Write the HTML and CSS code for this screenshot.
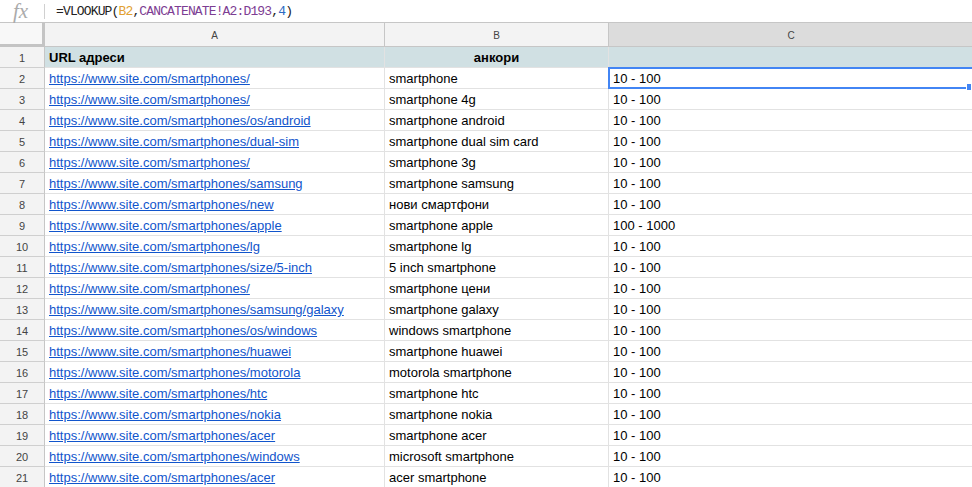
FILE: index.html
```html
<!DOCTYPE html>
<html>
<head>
<meta charset="utf-8">
<link rel="stylesheet" href="styles.css">
</head>
<body>
<div class="formula-bar">
  <span class="fx">fx</span>
  <span class="sep"></span>
  <span class="formula">=VLOOKUP(<span class="r1">B2</span>,<span class="r2">CANCATENATE!A2:D193</span>,<span class="num">4</span>)</span>
</div>
<div class="grid">
  <div class="corner"></div>
  <div class="colhead">A</div>
  <div class="colhead">B</div>
  <div class="colhead sel">C</div>

  <div class="rowhead">1</div>
  <div class="cell hdr">URL адреси</div>
  <div class="cell hdr center">анкори</div>
  <div class="cell hdr"></div>

  <div class="rowhead">2</div>
  <div class="cell"><span class="link">https://www.site.com/smartphones/</span></div>
  <div class="cell">smartphone</div>
  <div class="cell active">10 - 100<span class="handle"></span></div>

  <div class="rowhead">3</div>
  <div class="cell"><span class="link">https://www.site.com/smartphones/</span></div>
  <div class="cell">smartphone 4g</div>
  <div class="cell">10 - 100</div>

  <div class="rowhead">4</div>
  <div class="cell"><span class="link">https://www.site.com/smartphones/os/android</span></div>
  <div class="cell">smartphone android</div>
  <div class="cell">10 - 100</div>

  <div class="rowhead">5</div>
  <div class="cell"><span class="link">https://www.site.com/smartphones/dual-sim</span></div>
  <div class="cell">smartphone dual sim card</div>
  <div class="cell">10 - 100</div>

  <div class="rowhead">6</div>
  <div class="cell"><span class="link">https://www.site.com/smartphones/</span></div>
  <div class="cell">smartphone 3g</div>
  <div class="cell">10 - 100</div>

  <div class="rowhead">7</div>
  <div class="cell"><span class="link">https://www.site.com/smartphones/samsung</span></div>
  <div class="cell">smartphone samsung</div>
  <div class="cell">10 - 100</div>

  <div class="rowhead">8</div>
  <div class="cell"><span class="link">https://www.site.com/smartphones/new</span></div>
  <div class="cell">нови смартфони</div>
  <div class="cell">10 - 100</div>

  <div class="rowhead">9</div>
  <div class="cell"><span class="link">https://www.site.com/smartphones/apple</span></div>
  <div class="cell">smartphone apple</div>
  <div class="cell">100 - 1000</div>

  <div class="rowhead">10</div>
  <div class="cell"><span class="link">https://www.site.com/smartphones/lg</span></div>
  <div class="cell">smartphone lg</div>
  <div class="cell">10 - 100</div>

  <div class="rowhead">11</div>
  <div class="cell"><span class="link">https://www.site.com/smartphones/size/5-inch</span></div>
  <div class="cell">5 inch smartphone</div>
  <div class="cell">10 - 100</div>

  <div class="rowhead">12</div>
  <div class="cell"><span class="link">https://www.site.com/smartphones/</span></div>
  <div class="cell">smartphone цени</div>
  <div class="cell">10 - 100</div>

  <div class="rowhead">13</div>
  <div class="cell"><span class="link">https://www.site.com/smartphones/samsung/galaxy</span></div>
  <div class="cell">smartphone galaxy</div>
  <div class="cell">10 - 100</div>

  <div class="rowhead">14</div>
  <div class="cell"><span class="link">https://www.site.com/smartphones/os/windows</span></div>
  <div class="cell">windows smartphone</div>
  <div class="cell">10 - 100</div>

  <div class="rowhead">15</div>
  <div class="cell"><span class="link">https://www.site.com/smartphones/huawei</span></div>
  <div class="cell">smartphone huawei</div>
  <div class="cell">10 - 100</div>

  <div class="rowhead">16</div>
  <div class="cell"><span class="link">https://www.site.com/smartphones/motorola</span></div>
  <div class="cell">motorola smartphone</div>
  <div class="cell">10 - 100</div>

  <div class="rowhead">17</div>
  <div class="cell"><span class="link">https://www.site.com/smartphones/htc</span></div>
  <div class="cell">smartphone htc</div>
  <div class="cell">10 - 100</div>

  <div class="rowhead">18</div>
  <div class="cell"><span class="link">https://www.site.com/smartphones/nokia</span></div>
  <div class="cell">smartphone nokia</div>
  <div class="cell">10 - 100</div>

  <div class="rowhead">19</div>
  <div class="cell"><span class="link">https://www.site.com/smartphones/acer</span></div>
  <div class="cell">smartphone acer</div>
  <div class="cell">10 - 100</div>

  <div class="rowhead">20</div>
  <div class="cell"><span class="link">https://www.site.com/smartphones/windows</span></div>
  <div class="cell">microsoft smartphone</div>
  <div class="cell">10 - 100</div>

  <div class="rowhead">21</div>
  <div class="cell"><span class="link">https://www.site.com/smartphones/acer</span></div>
  <div class="cell">acer smartphone</div>
  <div class="cell">10 - 100</div>
</div>
</body>
</html>
```
FILE: styles.css
```css
html, body {
  margin: 0;
  padding: 0;
  background: #fff;
  overflow: hidden;
}
body {
  width: 972px;
  height: 487px;
  font-family: "Liberation Sans", Arial, sans-serif;
}
.formula-bar {
  height: 22px;
  border-bottom: 1px solid #c6c6c6;
  display: flex;
  align-items: center;
  box-sizing: content-box;
}
.fx {
  font-family: "Liberation Serif", serif;
  font-style: italic;
  font-size: 21px;
  color: #ababab;
  width: 31px;
  margin-left: 13px;
  line-height: 22px;
}
.sep {
  width: 1px;
  height: 15px;
  background: #d0d0d0;
}
.formula {
  margin-left: 11px;
  font-family: "Liberation Mono", monospace;
  font-size: 13px;
  letter-spacing: -0.86px;
  color: #222;
  white-space: nowrap;
}
.r1 { color: #e2a031; }
.r2 { color: #7d3d93; }
.num { color: #2e6ac2; }

.grid {
  display: grid;
  grid-template-columns: 45px 340px 224px 365px;
  grid-template-rows: 24px;
  grid-auto-rows: 21px;
}
.grid > div {
  box-sizing: border-box;
  white-space: nowrap;
  overflow: hidden;
}
.corner {
  background: #f8f8f8;
  border-right: 3px solid #c4c4c4;
  border-bottom: 3px solid #c4c4c4;
}
.colhead {
  background: #f3f3f3;
  border-right: 1px solid #c6c6c6;
  border-bottom: 1px solid #c6c6c6;
  font-size: 10px;
  color: #444;
  display: flex;
  align-items: center;
  justify-content: center;
  padding-top: 1px;
}
.colhead.sel {
  background: #dcdcdc;
}
.rowhead {
  background: #f3f3f3;
  border-right: 1px solid #c6c6c6;
  border-bottom: 1px solid #cfcfcf;
  font-size: 11px;
  color: #444;
  display: flex;
  align-items: center;
  justify-content: center;
  padding-top: 1px;
}
.cell {
  border-right: 1px solid #e2e2e2;
  border-bottom: 1px solid #e2e2e2;
  font-size: 13px;
  color: #000;
  padding: 2px 4px 0;
  line-height: 18px;
}
.cell.hdr {
  background: #d0e0e3;
  font-weight: bold;
}
.cell.center {
  text-align: center;
}
.link {
  color: #1155cc;
  text-decoration: underline;
}
.cell.active {
  position: relative;
  overflow: visible;
  border: 2px solid #4285f4;
  margin: -1px 0 0 -1px;
  padding: 1px 3px 0;
  line-height: 18px;
  height: 22px;
}
.handle {
  position: absolute;
  right: 0;
  bottom: -4px;
  width: 4px;
  height: 6px;
  background: #4285f4;
  border: 1px solid #fff;
}
```
